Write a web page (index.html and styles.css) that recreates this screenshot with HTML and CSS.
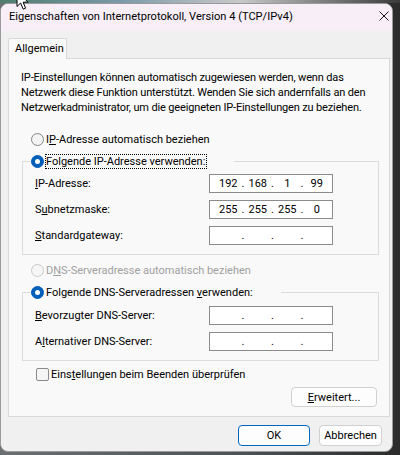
FILE: index.html
```html
<!DOCTYPE html>
<html lang="de">
<head>
<meta charset="utf-8">
<title>Eigenschaften von Internetprotokoll, Version 4 (TCP/IPv4)</title>
<link rel="stylesheet" href="styles.css">
</head>
<body>
<div class="desktop-strip"></div>
<div class="window">
  <div class="titlebar">
    <span class="title">Eigenschaften von Internetprotokoll, Version 4 (TCP/IPv4)</span>
    <svg class="close" width="10" height="10" viewBox="0 0 10 10"><path d="M0.5 0.5 L9.5 9.5 M9.5 0.5 L0.5 9.5" stroke="#1a1a1a" stroke-width="1" fill="none"/></svg>
  </div>
  <div class="content">
    <div class="tabs"><div class="tab">Allgemein</div></div>
    <div class="panel">
      <p class="intro">IP-Einstellungen können automatisch zugewiesen werden, wenn das<br>Netzwerk diese Funktion unterstützt. Wenden Sie sich andernfalls an den<br>Netzwerkadministrator, um die geeigneten IP-Einstellungen zu beziehen.</p>
      <div class="opt first"><span class="radio"></span><span>I<u>P</u>-Adresse automatisch beziehen</span></div>
      <div class="group">
        <div class="opt head"><span class="radio on"></span><span class="focus">Folgende IP-Adresse verwenden:</span></div>
        <div class="row top"><span><u>I</u>P-Adresse:</span><div class="ip"><span class="f">192</span><span class="d">.</span><span class="f">168</span><span class="d">.</span><span class="f">1</span><span class="d">.</span><span class="f">99</span></div></div>
        <div class="row"><span>S<u>u</u>bnetzmaske:</span><div class="ip"><span class="f">255</span><span class="d">.</span><span class="f">255</span><span class="d">.</span><span class="f">255</span><span class="d">.</span><span class="f">0</span></div></div>
        <div class="row"><span><u>S</u>tandardgateway:</span><div class="ip"><span class="f"></span><span class="d">.</span><span class="f"></span><span class="d">.</span><span class="f"></span><span class="d">.</span><span class="f"></span></div></div>
      </div>
      <div class="opt disabled mid"><span class="radio"></span><span>D<u>N</u>S-Serveradresse automatisch beziehen</span></div>
      <div class="group g2">
        <div class="opt head"><span class="radio on"></span><span>Folgende DNS-Serveradressen <u>v</u>erwenden:</span></div>
        <div class="row top"><span><u>B</u>evorzugter DNS-Server:</span><div class="ip"><span class="f"></span><span class="d">.</span><span class="f"></span><span class="d">.</span><span class="f"></span><span class="d">.</span><span class="f"></span></div></div>
        <div class="row"><span>A<u>l</u>ternativer DNS-Server:</span><div class="ip"><span class="f"></span><span class="d">.</span><span class="f"></span><span class="d">.</span><span class="f"></span><span class="d">.</span><span class="f"></span></div></div>
      </div>
      <div class="check-row"><span class="checkbox"></span><span>Eins<u>t</u>ellungen beim Beenden überprüfen</span></div>
      <div class="adv-row"><button class="btn adv"><u>E</u>rweitert...</button></div>
    </div>
    <div class="buttons">
      <button class="btn ok">OK</button>
      <button class="btn cancel">Abbrechen</button>
    </div>
  </div>
</div>
<svg class="cursor" width="14" height="22" viewBox="0 0 14 22"><path d="M1 1 L1 16.5 L4.6 13 L7.2 19.2 L9.6 18.2 L7.1 12.2 L12 12.2 Z" fill="#ffffff" stroke="#000000" stroke-width="1"/></svg>
</body>
</html>
```
FILE: styles.css
```css
html, body {
  margin: 0;
  padding: 0;
  width: 400px;
  height: 455px;
  overflow: hidden;
}
body {
  position: relative;
  background: linear-gradient(90deg, #6a6f72 0%, #4b5357 60%, #2b2b2b 100%);
  font-family: Roboto, "Noto Sans", sans-serif;
  font-size: 11px;
  color: #000;
}
.desktop-strip {
  height: 3px;
  background: linear-gradient(90deg, #4f7d6f 0%, #7a9aa8 30%, #c9c9c9 60%, #3a3a3a 100%);
}
.window {
  width: 393px;
  height: 449px;
  box-sizing: border-box;
  border: 1px solid #9a9a9a;
  border-radius: 8px;
  background: #f0f0f0;
  overflow: hidden;
  display: flex;
  flex-direction: column;
}
.titlebar {
  height: 27px;
  flex: none;
  background: #f7eef7;
  display: flex;
  align-items: center;
  padding: 0 3px 3px 8px;
  box-sizing: border-box;
}
.title {
  font-size: 11.1px;
  white-space: nowrap;
}
.close {
  margin-left: auto;
  flex: none;
}
.content {
  padding: 7px 0 0 7px;
  display: flex;
  flex-direction: column;
}
.tabs {
  display: flex;
  margin-bottom: -1px;
  position: relative;
  z-index: 1;
}
.tab {
  width: 59px;
  height: 21px;
  box-sizing: border-box;
  border: 1px solid #d9d9d9;
  border-bottom: none;
  border-radius: 2px 2px 0 0;
  background: #f9f9f9;
  padding-left: 6px;
  line-height: 19px;
}
.panel {
  width: 382px;
  box-sizing: border-box;
  border: 1px solid #d9d9d9;
  background: #f9f9f9;
  padding: 11px 11px 9px 12px;
}
.intro {
  margin: 0;
  line-height: 15px;
  letter-spacing: -0.15px;
  white-space: nowrap;
}
.opt {
  display: flex;
  align-items: center;
  height: 16px;
  gap: 2px;
  margin-left: 10px;
  white-space: nowrap;
}
.opt.first {
  margin-top: 16px;
}
.opt.mid {
  margin-top: 7px;
}
.opt.disabled {
  color: #a0a0a0;
}
.radio {
  width: 13px;
  height: 13px;
  box-sizing: border-box;
  border: 1px solid #858585;
  border-radius: 50%;
  background: #f3f3f3;
  flex: none;
  position: relative;
}
.opt.disabled .radio {
  border-color: #c8c8c8;
  background: #f6f6f6;
}
.radio.on {
  background: #005fb8;
  border-color: #005fb8;
}
.radio.on::after {
  content: "";
  position: absolute;
  left: 3px;
  top: 3px;
  width: 5px;
  height: 5px;
  border-radius: 50%;
  background: #ffffff;
}
.focus {
  outline: 1px dotted #000;
  outline-offset: 0;
  line-height: 13px;
  padding: 0 1px 0 0;
}
.group {
  margin: 14px 0 0 1px;
  width: 357px;
  box-sizing: border-box;
  border: 1px solid #dcdcdc;
  padding: 0 0 9px 12px;
}
.opt.head {
  margin: -9px 0 0 -4px;
  width: fit-content;
  padding-right: 28px;
  background: #f9f9f9;
}
.row {
  display: grid;
  grid-template-columns: 174px 124px;
  align-items: center;
  height: 19px;
  margin-top: 7px;
  white-space: nowrap;
}
.row.top {
  margin-top: 5px;
}
.g2 .row.top {
  margin-top: 6px;
}
.ip {
  display: flex;
  align-items: center;
  height: 19px;
  box-sizing: border-box;
  border: 1px solid #8b8b8b;
  background: #ffffff;
  padding-left: 5.5px;
}
.f {
  width: 25.5px;
  text-align: center;
  flex: none;
}
.d {
  width: 4px;
  text-align: center;
  flex: none;
}
.check-row {
  display: flex;
  align-items: center;
  height: 16px;
  gap: 2px;
  margin: 5px 0 0 15px;
  white-space: nowrap;
}
.checkbox {
  width: 13px;
  height: 13px;
  box-sizing: border-box;
  border: 1px solid #8a8a8a;
  border-radius: 2px;
  background: #f5f5f5;
  flex: none;
}
.adv-row {
  display: flex;
  justify-content: flex-end;
  margin-top: 5px;
  padding-right: 1px;
}
.btn {
  font-family: inherit;
  font-size: 11px;
  color: #000;
  border: 1px solid #d0d0d0;
  border-radius: 4px;
  background: #fdfdfd;
  padding: 0;
  margin: 0;
  box-sizing: border-box;
}
.adv {
  width: 86px;
  height: 20px;
}
.buttons {
  display: flex;
  justify-content: flex-end;
  gap: 9px;
  margin-top: 8px;
  padding-right: 10px;
}
.ok {
  width: 72px;
  height: 21px;
  border-color: #0067c0;
}
.cancel {
  width: 63px;
  height: 21px;
}
.cursor {
  position: absolute;
  left: 16px;
  top: -10px;
}
```
